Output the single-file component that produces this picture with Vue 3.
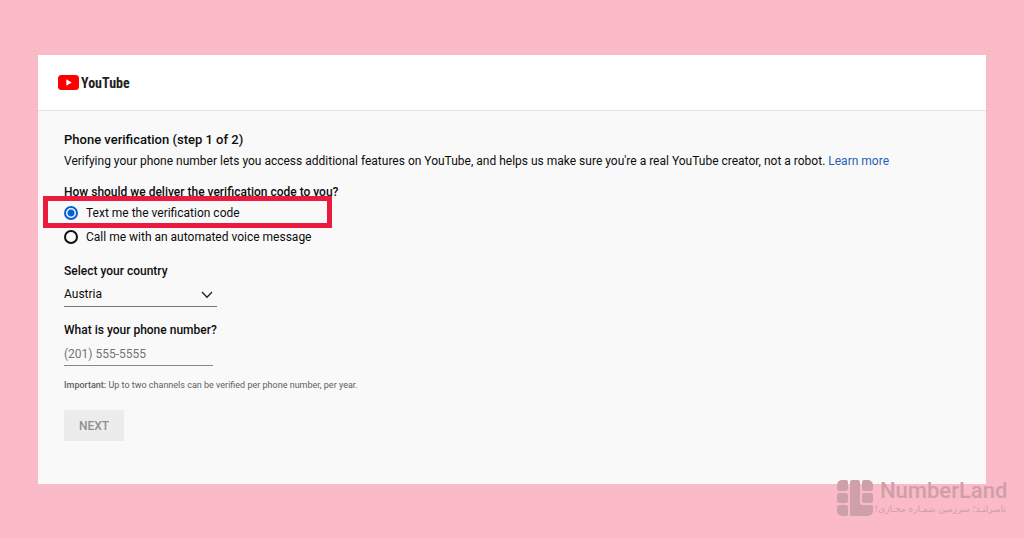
<script setup>
import { ref } from 'vue'

const method = ref('text')
const country = ref('Austria')
const phone = ref('')
</script>

<template>
  <div class="page">
    <main class="card">
      <header class="bar">
        <svg class="play" viewBox="0 0 21 15" aria-hidden="true">
          <rect width="21" height="15" rx="3.5" fill="#f00" />
          <path d="M8.3 4.3v6.4l5.4-3.2z" fill="#fff" />
        </svg>
        <span class="wordmark">YouTube</span>
      </header>

      <form class="form" @submit.prevent>
        <h1>Phone verification (step 1 of 2)</h1>
        <p class="intro">
          Verifying your phone number lets you access additional features on YouTube, and helps us make sure you're a real YouTube creator, not a robot. <a href="#">Learn more</a>
        </p>

        <fieldset>
          <legend>How should we deliver the verification code to you?</legend>
          <label class="option marked">
            <input v-model="method" type="radio" name="method" value="text" />
            <span>Text me the verification code</span>
          </label>
          <label class="option">
            <input v-model="method" type="radio" name="method" value="call" />
            <span>Call me with an automated voice message</span>
          </label>
        </fieldset>

        <label class="heading" for="country">Select your country</label>
        <div class="select">
          <select id="country" v-model="country">
            <option>Austria</option>
          </select>
          <svg viewBox="0 0 12 8" aria-hidden="true">
            <path d="M1 1l5 5.3L11 1" fill="none" stroke="#222" stroke-width="1.3" />
          </svg>
        </div>

        <label class="heading" for="phone">What is your phone number?</label>
        <input id="phone" v-model="phone" class="phone" type="tel" placeholder="(201) 555-5555" />

        <p class="note"><b>Important:</b> Up to two channels can be verified per phone number, per year.</p>
        <button type="submit" disabled>NEXT</button>
      </form>
    </main>

    <div class="brand">
      <svg viewBox="0 0 36 36" aria-hidden="true">
        <path d="M5 0h4a2 2 0 0 1 2 2v7a2 2 0 0 1-2 2H2a2 2 0 0 1-2-2V5a5 5 0 0 1 5-5z" />
        <rect y="13" width="11" height="10" rx="2.5" />
        <path d="M2 25h7a2 2 0 0 1 2 2v7a2 2 0 0 1-2 2H5a5 5 0 0 1-5-5v-4a2 2 0 0 1 2-2z" />
        <path d="M15 0h6a2 2 0 0 1 2 2v21a2 2 0 0 0 2 2h9a2 2 0 0 1 2 2v4a5 5 0 0 1-5 5H15a2 2 0 0 1-2-2V2a2 2 0 0 1 2-2z" />
        <path d="M27 0h4a5 5 0 0 1 5 5v4a2 2 0 0 1-2 2h-7a2 2 0 0 1-2-2V2a2 2 0 0 1 2-2z" />
        <rect x="25" y="13" width="11" height="10" rx="2.5" />
      </svg>
      <div class="names">
        <span class="latin">NumberLand</span>
        <span class="persian" lang="fa" dir="rtl">نامبرلنـد؛ سرزمین شمـاره مجـازی!</span>
      </div>
    </div>
  </div>
</template>

<style>
body {
  margin: 0;
  background: #fabac7;
}
</style>

<style scoped>
.page {
  position: relative;
  box-sizing: border-box;
  min-height: 100vh;
  padding: 55px 38px;
  background: #fabac7;
  color: #0d0d0d;
  font: 12px/16px Roboto, "Liberation Sans", sans-serif;
}
.card {
  background: #f9f9f9;
}
.bar {
  display: flex;
  align-items: center;
  gap: 2px;
  box-sizing: border-box;
  height: 56px;
  padding: 0 20px;
  border-bottom: 1px solid #e3e3e3;
  background: #fff;
}
.play {
  width: 21px;
  height: 15px;
}
.wordmark {
  color: #212121;
  font: bold 14px/20px "Roboto Condensed", "Liberation Sans Narrow", Roboto, sans-serif;
}
.form {
  display: flex;
  flex-direction: column;
  align-items: flex-start;
  padding: 20px 26px 43px;
}
h1 {
  margin: 0;
  font-size: 13px;
  font-weight: 500;
  line-height: 18px;
}
.intro {
  margin: 4px 0 15px;
}
a {
  color: #1a62b8;
  text-decoration: none;
}
fieldset {
  min-width: 0;
  margin: 0 0 14px;
  padding: 0;
  border: 0;
}
legend,
.heading {
  padding: 0;
  font-weight: 500;
}
.option {
  display: flex;
  align-items: center;
  gap: 8px;
  height: 24px;
}
.marked {
  position: relative;
  margin-top: 1px;
}
.marked::after {
  content: "";
  position: absolute;
  top: -5px;
  left: -21px;
  box-sizing: border-box;
  width: 289px;
  height: 32px;
  border: 5px solid #eb1b3f;
  pointer-events: none;
}
.option input {
  appearance: none;
  box-sizing: border-box;
  width: 14px;
  height: 14px;
  margin: 0;
  border: 2px solid #111;
  border-radius: 50%;
}
.option input:checked {
  border-color: #065fd4;
  background: radial-gradient(circle, #065fd4 3px, transparent 4px);
}
.select {
  position: relative;
  width: 153px;
  margin: 3px 0 15px;
}
.select select {
  appearance: none;
  display: block;
  box-sizing: border-box;
  width: 100%;
  height: 25px;
  padding: 0;
  border: 0;
  border-bottom: 1px solid #777;
  border-radius: 0;
  background: transparent;
  color: inherit;
  font: inherit;
}
.select svg {
  position: absolute;
  top: 9px;
  right: 4px;
  width: 12px;
  height: 8px;
  pointer-events: none;
}
.phone {
  box-sizing: border-box;
  width: 149px;
  height: 24px;
  margin: 4px 0 11px;
  padding: 0;
  border: 0;
  border-bottom: 1px solid #888;
  background: transparent;
  color: inherit;
  font: inherit;
}
.phone::placeholder {
  color: #757575;
  opacity: 1;
}
.note {
  margin: 0 0 17px;
  color: #606060;
  font-size: 9px;
}
.note b {
  font-weight: 500;
}
button {
  width: 60px;
  height: 31px;
  padding: 0;
  border: 0;
  background: #ececec;
  color: #909090;
  font: 500 12px/16px Roboto, "Liberation Sans", sans-serif;
}
.brand {
  position: absolute;
  right: 18px;
  bottom: 23px;
  display: flex;
  gap: 7px;
  color: #cf9fa9;
}
.brand svg {
  width: 36px;
  height: 36px;
  fill: #cda0aa;
}
.names {
  display: flex;
  flex-direction: column;
  width: 126px;
}
.latin {
  font: 500 22px/22px Roboto, "DejaVu Sans", sans-serif;
}
.persian {
  font: 9px/14px "DejaVu Sans", sans-serif;
  white-space: nowrap;
}
</style>
